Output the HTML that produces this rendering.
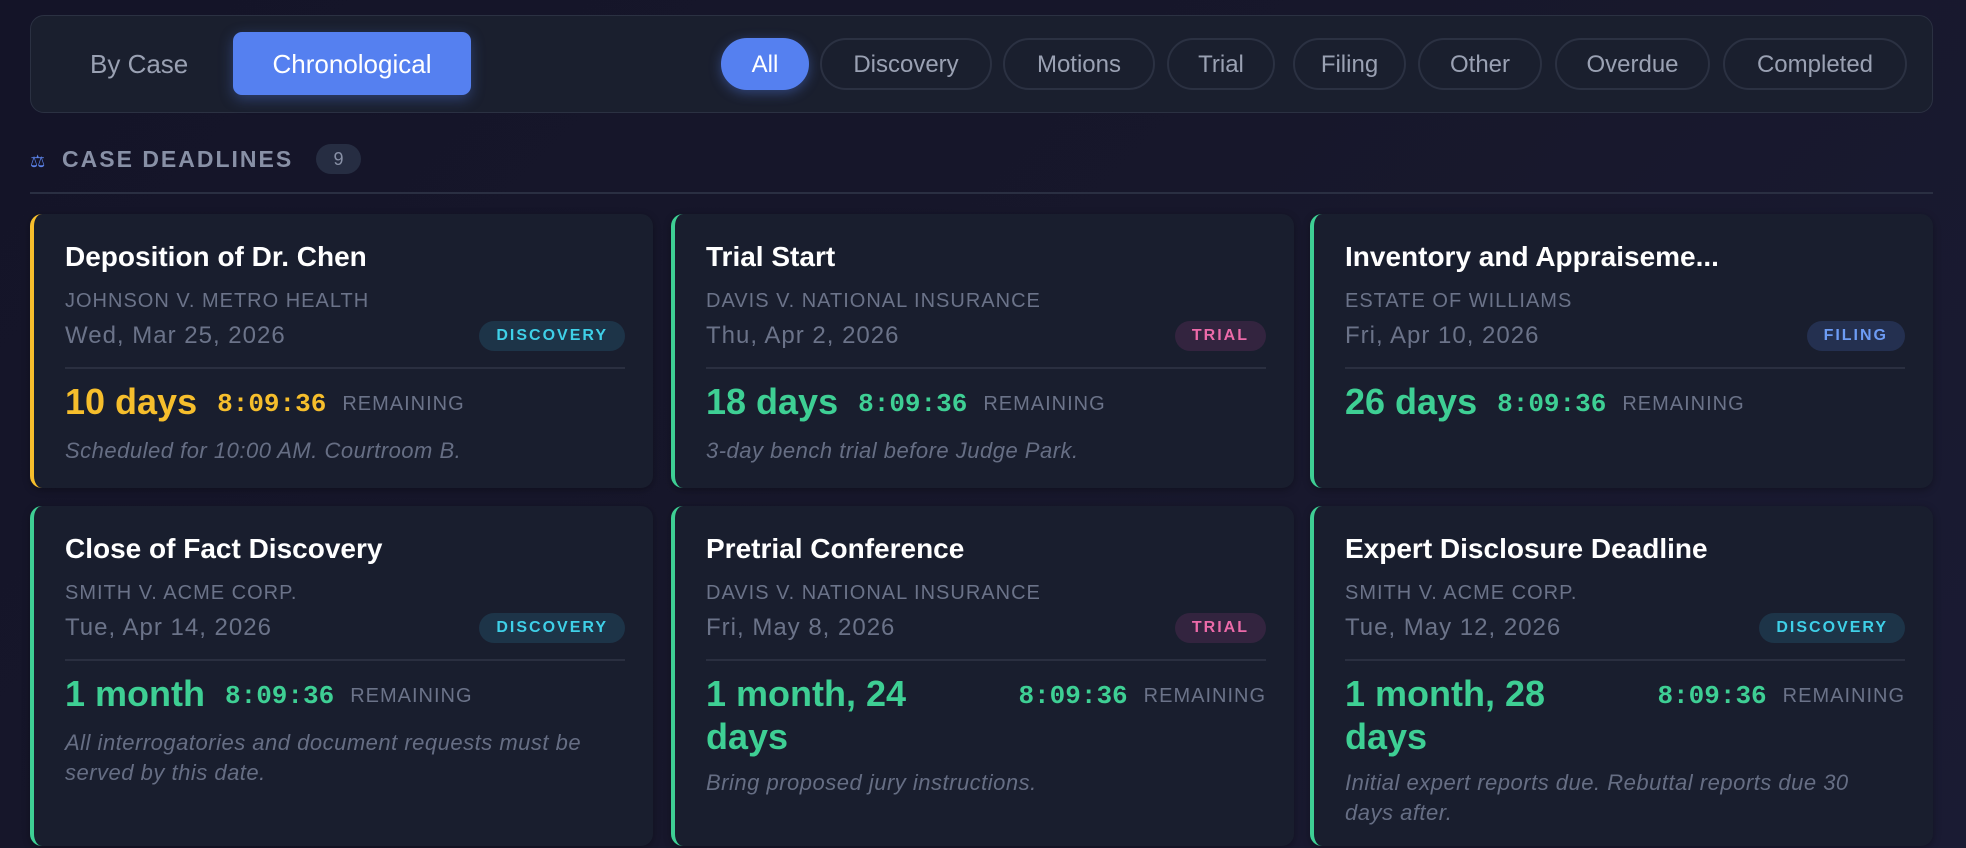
<!DOCTYPE html>
<html><head><meta charset="utf-8"><style>
*{box-sizing:border-box;margin:0;padding:0}
body{width:1966px;height:848px;overflow:hidden;background:linear-gradient(135deg,#141428 0%,#17172b 50%,#1a1b33 100%);font-family:"Liberation Sans",sans-serif;position:relative}
.bar{position:absolute;left:30px;top:15px;width:1903px;height:98px;background:#1a1f2e;border:1px solid #2b3142;border-radius:14px}
.bycase{position:absolute;left:90px;top:49px;font-size:26px;color:#9aa1b3}
.chrono{position:absolute;left:233px;top:32px;width:238px;height:63px;background:#5580f0;border-radius:9px;color:#fff;font-size:26px;text-align:center;line-height:65px;box-shadow:0 4px 14px rgba(85,128,240,.35)}
.pill{position:absolute;top:38px;height:52px;border:2px solid #2b3142;border-radius:26px;color:#9aa1b3;font-size:24px;text-align:center;line-height:50px;white-space:nowrap}
.pill.on{background:#5580f0;border-color:#5580f0;color:#fff;box-shadow:0 3px 12px rgba(85,128,240,.4)}
.hdr{position:absolute;left:30px;top:146px;font-size:23px;font-weight:bold;letter-spacing:2px;color:#8890a6}
.cnt{position:absolute;left:316px;top:144px;width:45px;height:30px;border-radius:15px;background:#262d42;color:#8890a6;font-size:18px;text-align:center;line-height:30px}
.line{position:absolute;left:30px;top:192px;width:1903px;height:2px;background:#2a2f42}
.card{position:absolute;width:623px;background:#191e2e;border-radius:12px;border-left:4px solid #3ecf94;padding:27px 28px 0 31px;box-shadow:0 2px 8px rgba(0,0,0,.3)}
.card.y{border-left-color:#f6be2c}
.t{font-size:28px;font-weight:bold;color:#fff;height:32px;line-height:32px;white-space:nowrap}
.c{font-size:20px;color:#6b7389;letter-spacing:1px;margin-top:16px;line-height:24px}
.dr{display:flex;justify-content:space-between;align-items:center;margin-top:7px;height:32px}
.d{font-size:24px;color:#6b7389;letter-spacing:1px}
.b{font-size:16px;font-weight:bold;letter-spacing:2px;padding:0 17px;height:30px;line-height:30px;border-radius:15px}
.disc{background:#1d3448;color:#3fd0e8}.trial{background:#33243f;color:#ec6aa9}.fil{background:#243050;color:#6d9cf5}
.hr{height:2px;background:#2a2f40;margin-top:15px}
.cd{display:flex;align-items:flex-start;margin-top:11px}
.big{font-size:36px;font-weight:bold;color:#3ecf94;line-height:43px;white-space:nowrap}
.y .big,.y .tm{color:#f6be2c}
.tm{font-family:"Liberation Mono",monospace;font-weight:bold;font-size:26px;color:#3ecf94;margin-left:20px;line-height:43px;margin-top:3px;white-space:nowrap}
.rem{font-size:20px;color:#6b7389;letter-spacing:1px;margin-left:16px;line-height:43px;margin-top:3px}
.r{margin-left:auto}
.n{font-size:22px;font-style:italic;color:#666e84;margin-top:10px;line-height:30px;letter-spacing:.5px;white-space:nowrap}
</style></head><body>
<div class="bar"></div>
<div class="bycase">By Case</div>
<div class="chrono">Chronological</div>
<div class="pill on" style="left:721px;width:88px">All</div>
<div class="pill" style="left:820px;width:172px">Discovery</div>
<div class="pill" style="left:1003px;width:152px">Motions</div>
<div class="pill" style="left:1167px;width:108px">Trial</div>
<div class="pill" style="left:1293px;width:113px">Filing</div>
<div class="pill" style="left:1418px;width:124px">Other</div>
<div class="pill" style="left:1555px;width:155px">Overdue</div>
<div class="pill" style="left:1723px;width:184px">Completed</div>
<div class="hdr"><span style="color:#5b82e8;font-size:17px;letter-spacing:0;font-weight:normal">⚖</span>&nbsp; CASE DEADLINES</div>
<div class="cnt">9</div>
<div class="line"></div>

<div class="card y" style="left:30px;top:214px;height:274px">
<div class="t">Deposition of Dr. Chen</div><div class="c">JOHNSON V. METRO HEALTH</div>
<div class="dr"><span class="d">Wed, Mar 25, 2026</span><span class="b disc">DISCOVERY</span></div><div class="hr"></div>
<div class="cd"><span class="big">10 days</span><span class="tm">8:09:36</span><span class="rem">REMAINING</span></div>
<div class="n">Scheduled for 10:00 AM. Courtroom B.</div></div>

<div class="card" style="left:671px;top:214px;height:274px">
<div class="t">Trial Start</div><div class="c">DAVIS V. NATIONAL INSURANCE</div>
<div class="dr"><span class="d">Thu, Apr 2, 2026</span><span class="b trial">TRIAL</span></div><div class="hr"></div>
<div class="cd"><span class="big">18 days</span><span class="tm">8:09:36</span><span class="rem">REMAINING</span></div>
<div class="n">3-day bench trial before Judge Park.</div></div>

<div class="card" style="left:1310px;top:214px;height:274px">
<div class="t">Inventory and Appraiseme...</div><div class="c">ESTATE OF WILLIAMS</div>
<div class="dr"><span class="d">Fri, Apr 10, 2026</span><span class="b fil">FILING</span></div><div class="hr"></div>
<div class="cd"><span class="big">26 days</span><span class="tm">8:09:36</span><span class="rem">REMAINING</span></div></div>

<div class="card" style="left:30px;top:506px;height:340px">
<div class="t">Close of Fact Discovery</div><div class="c">SMITH V. ACME CORP.</div>
<div class="dr"><span class="d">Tue, Apr 14, 2026</span><span class="b disc">DISCOVERY</span></div><div class="hr"></div>
<div class="cd"><span class="big">1 month</span><span class="tm">8:09:36</span><span class="rem">REMAINING</span></div>
<div class="n">All interrogatories and document requests must be<br>served by this date.</div></div>

<div class="card" style="left:671px;top:506px;height:340px">
<div class="t">Pretrial Conference</div><div class="c">DAVIS V. NATIONAL INSURANCE</div>
<div class="dr"><span class="d">Fri, May 8, 2026</span><span class="b trial">TRIAL</span></div><div class="hr"></div>
<div class="cd"><span class="big">1 month, 24<br>days</span><span class="tm r">8:09:36</span><span class="rem">REMAINING</span></div>
<div class="n">Bring proposed jury instructions.</div></div>

<div class="card" style="left:1310px;top:506px;height:340px">
<div class="t">Expert Disclosure Deadline</div><div class="c">SMITH V. ACME CORP.</div>
<div class="dr"><span class="d">Tue, May 12, 2026</span><span class="b disc">DISCOVERY</span></div><div class="hr"></div>
<div class="cd"><span class="big">1 month, 28<br>days</span><span class="tm r">8:09:36</span><span class="rem">REMAINING</span></div>
<div class="n">Initial expert reports due. Rebuttal reports due 30<br>days after.</div></div>
</body></html>
